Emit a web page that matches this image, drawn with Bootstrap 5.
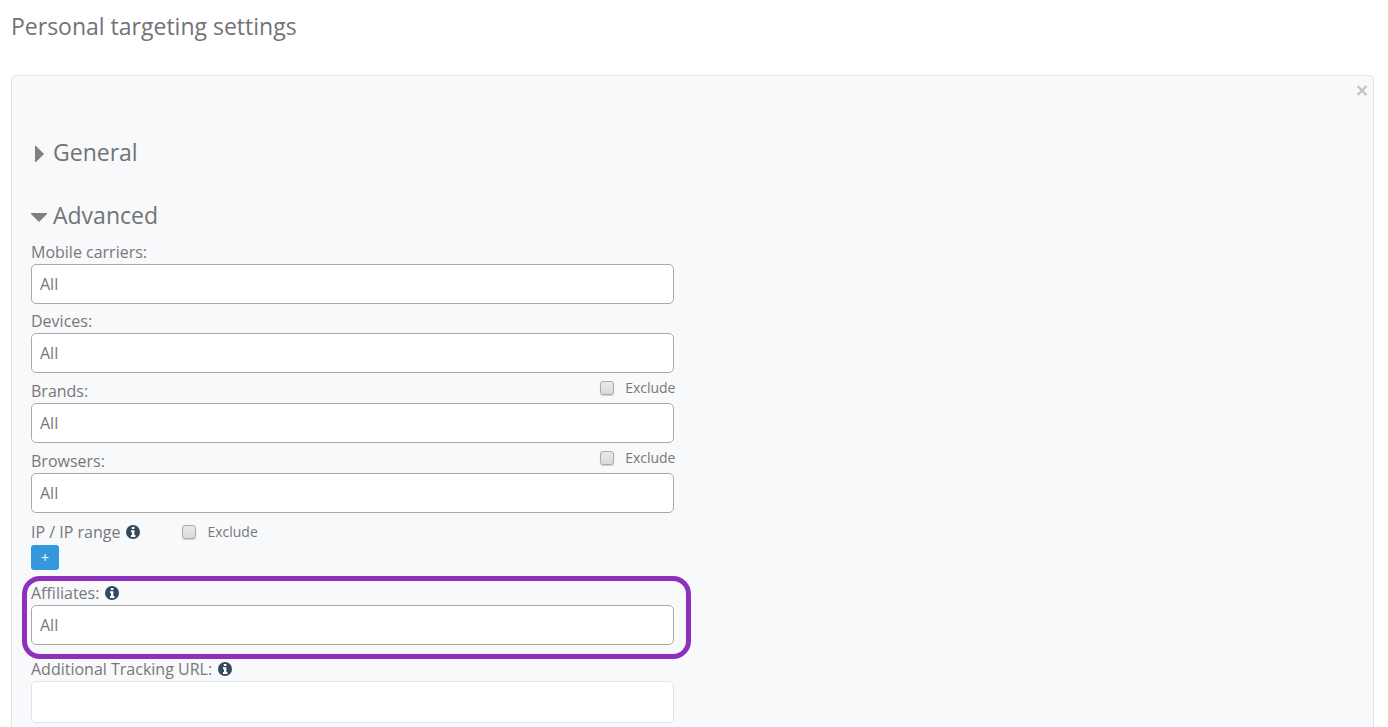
<!DOCTYPE html>
<html lang="en">
<head>
<meta charset="utf-8">
<meta name="viewport" content="width=device-width, initial-scale=1">
<title>Personal targeting settings</title>
<link href="https://cdn.jsdelivr.net/npm/bootstrap@5.3.0/dist/css/bootstrap.min.css" rel="stylesheet">
<style>
  body { font-family: "Open Sans", sans-serif; color: #77787a; padding: 8px 14px 0 11px; }
  .title-line { font-size: 23px; line-height: 36px; font-weight: 400; color: #727376; margin: 0; }
  .panel { background: #f8f9fb; border: 1px solid #e1e3e6; border-bottom: 0; border-radius: 5px 5px 0 0; margin-top: 31px; padding-top: 58px; }
  .panel-close { top: 9px; right: 5px; width: 12px; height: 12px; }
  .panel-close svg, .caret svg, .info svg { display: block; }
  .side-pad { padding-left: 19px; padding-right: 19px; }
  .toggle { gap: 6px; }
  .caret { width: 16px; padding-top: 4px; }
  .general { margin-bottom: 27px; }
  .advanced { margin-bottom: 7px; }
  .field { margin-bottom: 5px; }
  .field-label { font-size: 16px; line-height: 24px; }
  .field-input { height: 40px; font-size: 16px; line-height: 24px; color: #77787a; border: 1px solid #a9a9ab; border-radius: 5px; padding: 0 8px; }
  .url-input { height: 42px; border-color: #e0e3e7; }
  .with-exclude { padding-top: 1px; }
  .exclude { font-size: 14px; line-height: 18px; gap: 11px; }
  .with-exclude .exclude { margin-right: -2px; }
  .exclude input { appearance: none; width: 14px; height: 14px; margin: 0; border: 1px solid #ababab; border-radius: 3px; background: linear-gradient(#e9e9e9, #dadada); box-shadow: 0 1px 1px #d0d0d0; }
  .exclude input:checked { background: #3598dc; }
  .ip-row { margin-top: 7px; gap: 42px; }
  .info { gap: 6px; }
  .add-btn { width: 28px; height: 25px; padding: 0; font-size: 14px; line-height: 24px; color: #fff; background: #3598dc; border: 0; border-radius: 3px; margin: 1px 0 11px; }
  .add-btn:hover { color: #fff; background: #2a85c4; }
  .highlight { margin-bottom: 12px; }
  .highlight::after { content: ""; position: absolute; inset: -5px -17px -14px -9px; border: 5px solid #8f2fbe; border-radius: 18px; pointer-events: none; }
</style>
</head>
<body class="vh-100 overflow-hidden d-flex flex-column bg-white">
<svg class="d-none" aria-hidden="true">
  <symbol id="info-icon" viewBox="0 0 14 14">
    <circle cx="7" cy="7" r="7" fill="#34495e"/>
    <path fill="#fff" d="M5.800 2h2.600v2H5.800zM5 5.200h3.400v4.700h1V12H5V9.900h1V7.200H5z"/>
  </symbol>
</svg>
<h1 class="title-line">Personal targeting settings</h1>

<main class="panel position-relative flex-grow-1">
  <button type="button" class="panel-close position-absolute btn p-0 border-0" aria-label="Close">
    <svg width="12" height="12" viewBox="0 0 12 12"><path d="M1.500 1l9 9m0-9l-9 9" stroke="#c3c4c6" stroke-width="2.400"/></svg>
  </button>
  <div class="row g-0">
    <form class="col-6 side-pad">
      <h2 class="title-line general">
        <button type="button" class="toggle bg-transparent border-0 p-0 d-flex align-items-center text-reset" aria-expanded="false">
          <span class="caret"><svg width="16" height="16" viewBox="0 0 16 16"><path fill="#808080" d="M4 0h1l8 8-8 8H4z"/></svg></span>General
        </button>
      </h2>
      <h2 class="title-line advanced">
        <button type="button" class="toggle bg-transparent border-0 p-0 d-flex align-items-center text-reset" aria-expanded="true">
          <span class="caret"><svg width="16" height="16" viewBox="0 0 16 16"><path fill="#808080" d="M0 4h16v1l-8 8-8-8z"/></svg></span>Advanced
        </button>
      </h2>

      <div class="field">
        <label class="field-label d-block" for="carriers">Mobile carriers:</label>
        <input class="field-input d-block w-100" id="carriers" type="text" value="All">
      </div>
      <div class="field">
        <label class="field-label d-block" for="devices">Devices:</label>
        <input class="field-input d-block w-100" id="devices" type="text" value="All">
      </div>
      <div class="field with-exclude">
        <div class="d-flex justify-content-between align-items-start">
          <label class="field-label" for="brands">Brands:</label>
          <label class="exclude d-flex align-items-center"><input type="checkbox">Exclude</label>
        </div>
        <input class="field-input d-block w-100" id="brands" type="text" value="All">
      </div>
      <div class="field with-exclude">
        <div class="d-flex justify-content-between align-items-start">
          <label class="field-label" for="browsers">Browsers:</label>
          <label class="exclude d-flex align-items-center"><input type="checkbox">Exclude</label>
        </div>
        <input class="field-input d-block w-100" id="browsers" type="text" value="All">
      </div>

      <div class="ip-row d-flex align-items-center">
        <div class="field-label info d-flex align-items-center"><label for="add-ip">IP / IP range</label><svg width="14" height="14"><use href="#info-icon"/></svg></div>
        <label class="exclude d-flex align-items-center"><input type="checkbox">Exclude</label>
      </div>
      <button type="button" class="add-btn btn d-block" id="add-ip">+</button>

      <div class="highlight position-relative">
        <label class="field-label info d-flex align-items-center" for="affiliates">Affiliates:<svg width="14" height="14"><use href="#info-icon"/></svg></label>
        <input class="field-input d-block w-100" id="affiliates" type="text" value="All">
      </div>
      <div class="field">
        <label class="field-label info d-flex align-items-center" for="tracking">Additional Tracking URL:<svg width="14" height="14"><use href="#info-icon"/></svg></label>
        <input class="field-input url-input d-block w-100" id="tracking" type="text">
      </div>
    </form>
  </div>
</main>
<script src="https://cdn.jsdelivr.net/npm/bootstrap@5.3.0/dist/js/bootstrap.bundle.min.js"></script>
</body>
</html>
